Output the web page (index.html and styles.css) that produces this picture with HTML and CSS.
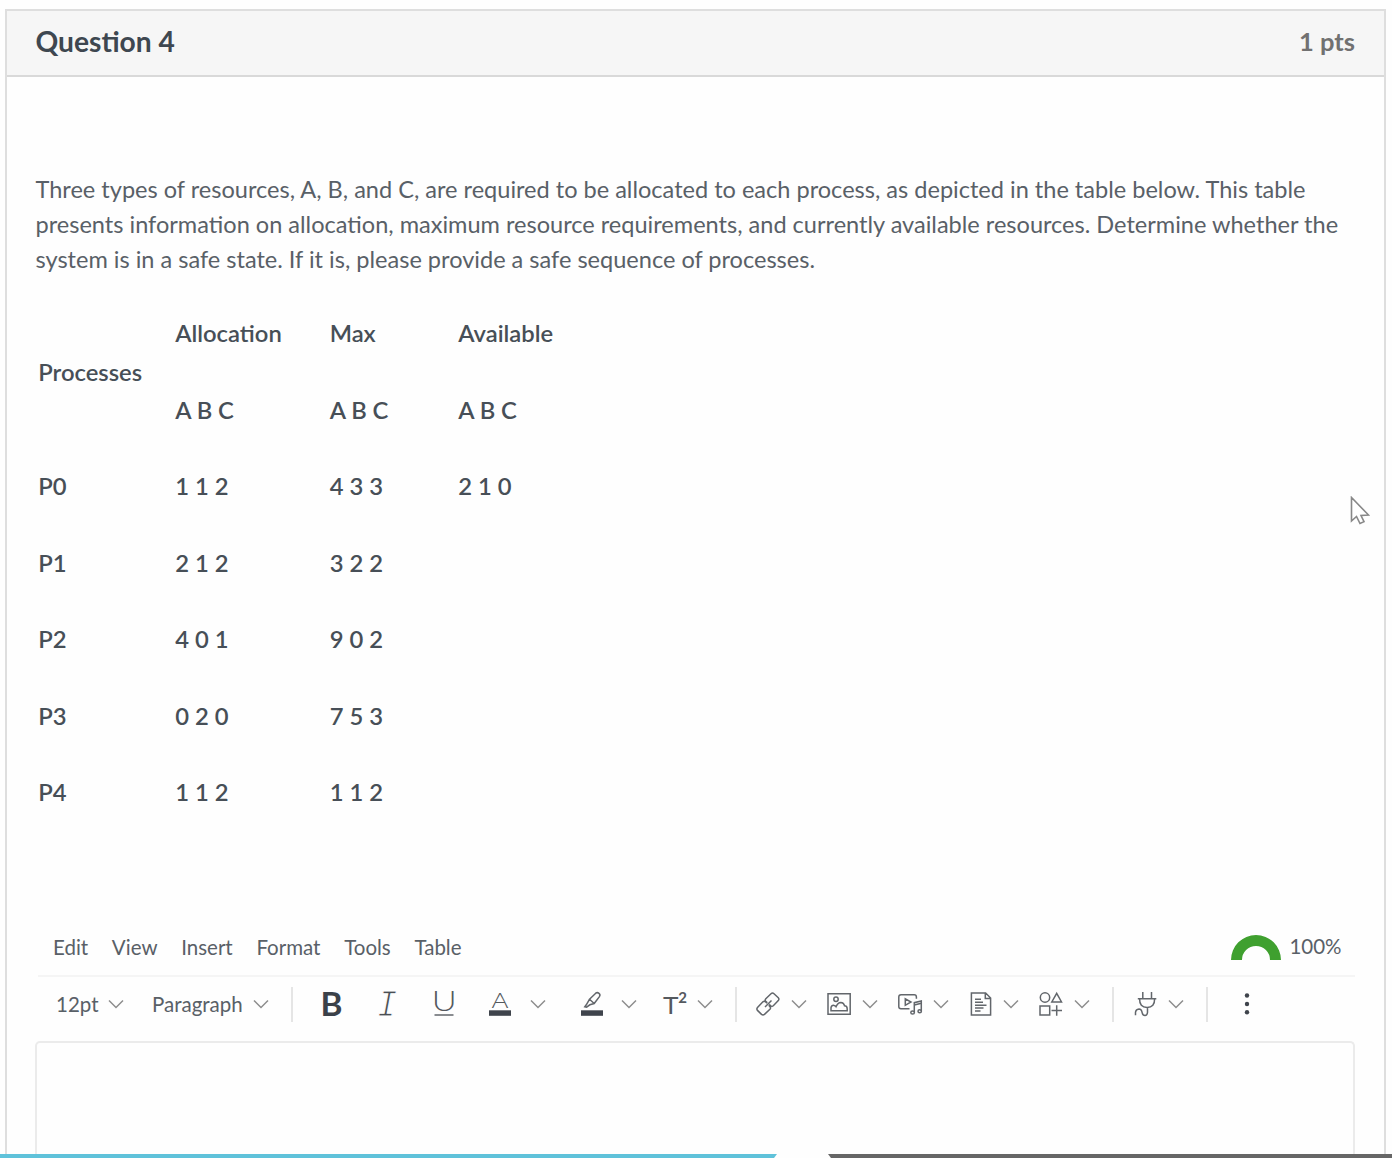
FILE: index.html
```html
<!DOCTYPE html>
<html lang="en">
<head>
<meta charset="utf-8">
<title>Question 4</title>
<link rel="stylesheet" href="styles.css">
</head>
<body>
<svg class="defs" aria-hidden="true">
  <symbol id="chev" viewBox="0 0 16 10"><path d="M1 1.5 8 8.5 15 1.5"/></symbol>
</svg>
<main class="card">
  <header class="head"><h1>Question 4</h1><span class="pts">1 pts</span></header>
  <div class="body">
    <p class="prompt">Three types of resources, A, B, and C, are required to be allocated to each process, as depicted in the table below. This table<br>presents information on allocation, maximum resource requirements, and currently available resources. Determine whether the<br>system is in a safe state. If it is, please provide a safe sequence of processes.</p>
    <table class="data">
      <colgroup><col class="c1"><col class="c2"><col class="c3"><col class="c4"></colgroup>
      <tbody>
      <tr class="top"><td rowspan="2">Processes</td><td>Allocation</td><td>Max</td><td>Available</td></tr>
      <tr><td>A B C</td><td>A B C</td><td>A B C</td></tr>
      <tr><td>P0</td><td>1 1 2</td><td>4 3 3</td><td>2 1 0</td></tr>
      <tr><td>P1</td><td>2 1 2</td><td>3 2 2</td><td></td></tr>
      <tr><td>P2</td><td>4 0 1</td><td>9 0 2</td><td></td></tr>
      <tr><td>P3</td><td>0 2 0</td><td>7 5 3</td><td></td></tr>
      <tr><td>P4</td><td>1 1 2</td><td>1 1 2</td><td></td></tr>
      </tbody>
    </table>
    <section class="editor">
      <div class="menubar">
        <nav class="menus"><span>Edit</span><span>View</span><span>Insert</span><span>Format</span><span>Tools</span><span>Table</span></nav>
        <div class="score"><svg width="50" height="26" viewBox="0 0 50 26"><path d="M0 25a25 25 0 0 1 50 0H39a14 14 0 0 0-28 0Z" fill="#3fa02f"/></svg><span>100%</span></div>
      </div>
      <div class="toolbar">
        <span>12pt</span><svg class="chev"><use href="#chev"/></svg>
        <span>Paragraph</span><svg class="chev"><use href="#chev"/></svg>
        <i class="sep"></i>
        <svg class="icon" viewBox="0 0 24 24"><text class="bold" x="0.5" y="23.5" textLength="22" lengthAdjust="spacingAndGlyphs">B</text></svg>
        <svg class="icon" viewBox="0 0 24 24"><text class="ital" x="1.500" y="24">I</text></svg>
        <svg class="icon" viewBox="0 0 24 24"><text class="light" x="-0.3" y="18.500" font-size="26.500" textLength="25" lengthAdjust="spacingAndGlyphs">U</text><path d="M2.500 23h19"/></svg>
        <svg class="icon" viewBox="0 0 24 24"><text class="light" x="3.500" y="15.500" font-size="22" textLength="17" lengthAdjust="spacingAndGlyphs">A</text><path class="bar" d="M1 18.300h22v5.500H1z"/></svg>
        <svg class="chev"><use href="#chev"/></svg>
        <svg class="icon" viewBox="0 0 24 24"><path d="M9.5 7.3 15.7 1.2q1.6-1.2 3.3.1t.4 3.3L14.2 11.500l-4.300 1.300-3.300 2.300-1.800-.4 1.500-1.900zM9.500 7.300l4.700 4.200"/><path class="bar" d="M1 18.300h22v5.500H1z"/></svg>
        <svg class="chev"><use href="#chev"/></svg>
        <svg class="icon" viewBox="0 0 24 24"><text class="reg" x="0" y="22.300" font-size="24" textLength="15.500" lengthAdjust="spacingAndGlyphs">T</text><text class="sup" x="15.300" y="11" font-size="15">2</text></svg>
        <svg class="chev"><use href="#chev"/></svg>
        <i class="sep"></i>
        <svg class="icon" viewBox="0 0 24 24"><path d="M11.300 10.800 9.800 9.300q-1.200-1.300 0-2.600L15 1.700q1.500-1.300 3 0l4.300 4q1.200 1.400 0 2.900l-5 5.200q-1.400 1.200-2.700 0l-1.400-1.400M11 11.200 9.500 9.800q-1.300-1-2.600 0L1.500 15.500q-1.200 1.500 0 2.900l4 4q1.500 1.200 3 0l5.400-5.200q1.200-1.300 0-2.600l-1.200-1.300M9 15 15.500 8.500"/></svg>
        <svg class="chev"><use href="#chev"/></svg>
        <svg class="icon" viewBox="0 0 24 24"><path d="M1 1.800h22.200v20.500H1zM4 18.700v-3q.5-2.600 3-2.300 1.300.2 2 1.300 1.800-4.200 4.800-4.300 3 0 3.700 3.300 2.700.1 2.700 3v2z"/><circle cx="9" cy="7.300" r="2.200"/></svg>
        <svg class="chev"><use href="#chev"/></svg>
        <svg class="icon" viewBox="0 0 24 24"><path d="M11.500 16.700H3q-2.200 0-2.200-2.200V5Q.8 2.800 3 2.800h13.200q2.200 0 2.200 2.200v1.700M7.300 6.800v6.500L13 10zM16.300 20.200v-9.500l7-1.700v10"/><path d="M16.300 13l7-1.700"/><ellipse cx="14.600" cy="20.500" rx="1.800" ry="1.600"/><ellipse cx="21.700" cy="19.300" rx="1.700" ry="1.500"/></svg>
        <svg class="chev"><use href="#chev"/></svg>
        <svg class="icon" viewBox="0 0 24 24"><path d="M2.400 1h14.200l5 5v17H2.400zM16.300 1v5.500h5.200M6 7.300h6M6 10.300h8M6 13.200h11.500M6 16h8.500M6 19h5.500"/></svg>
        <svg class="chev"><use href="#chev"/></svg>
        <svg class="icon" viewBox="0 0 24 24"><circle cx="6" cy="5.500" r="4.700"/><path d="M17.700 1.300 22.500 10h-9.700zM1 14h9.700v9H1zM17.700 13.300v10.400M12.500 18.500H23"/></svg>
        <svg class="chev"><use href="#chev"/></svg>
        <i class="sep"></i>
        <svg class="icon" viewBox="0 0 24 24"><path d="M8.800 0v6.300M17.500 0v6.300M3.800 6.700h18.500M5.600 6.700q-.2 8.800 7.500 8.800t7.500-8.800M13.500 15.500v5q-.3 3-2.500 3t-2.800-2.700Q7.500 17 5 17q-3.300.4-3.500 3.300v3"/></svg>
        <svg class="chev"><use href="#chev"/></svg>
        <i class="sep"></i>
        <svg class="icon dots" viewBox="0 0 24 24"><circle cx="12" cy="3.500" r="2.200"/><circle cx="12" cy="12" r="2.200"/><circle cx="12" cy="20.200" r="2.200"/></svg>
      </div>
      <div class="area"></div>
    </section>
  </div>
</main>
<footer class="strip"><div class="played"></div><div class="rest"></div></footer>
<svg class="cursor" width="20" height="29" viewBox="0 0 20 29"><path d="M1.500 1.500v23.500l5-4.500 3.500 7 4-1.800-3-6.200 7.500-.5z" fill="#fff" stroke="#888" stroke-width="1.600"/></svg>
</body>
</html>
```
FILE: styles.css
```css
* { box-sizing: border-box; }
body {
  margin: 0;
  height: 1158px;
  padding-top: 9px;
  display: flex;
  flex-direction: column;
  overflow: hidden;
  background: #fefefe;
  color: #596067;
  font-family: Lato, "Liberation Sans", sans-serif;
  font-size: 23.550px;
}
.defs { display: none; }
.card {
  flex: 1;
  min-height: 0;
  margin: 0 6px 0 5px;
  border: 2px solid #dedede;
  border-bottom: 0;
  display: flex;
  flex-direction: column;
}
.head {
  height: 66px;
  flex: none;
  padding: 0 29px 5px 28.500px;
  display: flex;
  justify-content: space-between;
  align-items: center;
  background: #f6f6f6;
  border-bottom: 2px solid #d9d9d9;
}
.head h1 { margin: 0; font-size: 28.200px; font-weight: 700; line-height: 58px; color: #3e4750; }
.pts { font-size: 25.500px; font-weight: 700; color: #717171; }
.body { flex: 1; min-height: 0; padding: 95px 29px 0 28px; display: flex; flex-direction: column; }
.prompt { margin: 0; padding-left: 0.500px; line-height: 35.200px; white-space: nowrap; }
.data {
  margin-top: 18px;
  width: 570px;
  table-layout: fixed;
  border-collapse: collapse;
  color: #474f57;
  font-size: 23.800px;
  font-weight: 600;
}
.data td { height: 76.500px; padding: 0 0 0 3.200px; line-height: 35px; vertical-align: middle; }
.c1 { width: 137px; }
.c2 { width: 154.500px; }
.c3 { width: 128.500px; }
.c4 { width: 150px; }
.editor { margin-top: 98px; flex: 1; display: flex; flex-direction: column; font-size: 20.500px; }
.menubar {
  height: 48px;
  margin: 0 0 0 3px;
  padding: 0 13.500px 0 15px;
  display: flex;
  justify-content: space-between;
  border-bottom: 2px solid #f5f5f5;
}
.menus { display: flex; gap: 23.700px; line-height: 37px; }
.score { display: flex; gap: 8px; line-height: 35px; }
.score svg { margin-top: 6px; }
.toolbar {
  height: 64px;
  padding: 0 0 10px 21px;
  display: grid;
  grid-template-columns: 52px 44px 101px 38px 29px 56px 56px 56px 42px 50px 41px 42px 34px 38px 21px 35px 36px 35px 36px 35px 36px 34px 36px 35px 38px 22px 34px 38px 29px 24px;
  align-items: center;
}
.toolbar span { line-height: 24px; padding-bottom: 1px; }
.chev { width: 16px; height: 10px; stroke: #8d8d8d; stroke-width: 1.500; fill: none; }
.sep { width: 2px; height: 35px; background: #e5e5e5; }
.icon { width: 24px; height: 24px; overflow: visible; stroke: #62666b; stroke-width: 1.500; fill: none; }
.icon text { stroke: none; fill: #55595e; }
.icon .bold { font-size: 32px; font-weight: 700; fill: #3b4149; }
.icon .ital { font: italic 400 33px "DejaVu Sans Mono", monospace; fill: #4a4f54; stroke: #fefefe; stroke-width: 1.200; }
.icon .light { font-weight: 300; }
.icon .reg { font-weight: 400; }
.icon .sup { font-weight: 700; }
.icon .bar { fill: #3f444c; stroke: none; }
.icon.dots { fill: #3f444c; stroke: none; }
.area { flex: 1; border: 2px solid #ebebeb; border-bottom: 0; border-radius: 5px 5px 0 0; }
.strip { height: 4px; flex: none; display: flex; justify-content: space-between; }
.played { width: 777px; background: #5fc2da; clip-path: polygon(0 0, 100% 0, 774px 100%, 0 100%); }
.rest { width: 564px; background: #666; clip-path: polygon(0 0, 100% 0, 100% 100%, 3px 100%); }
.cursor { position: absolute; left: 1350px; top: 496px; }
```
